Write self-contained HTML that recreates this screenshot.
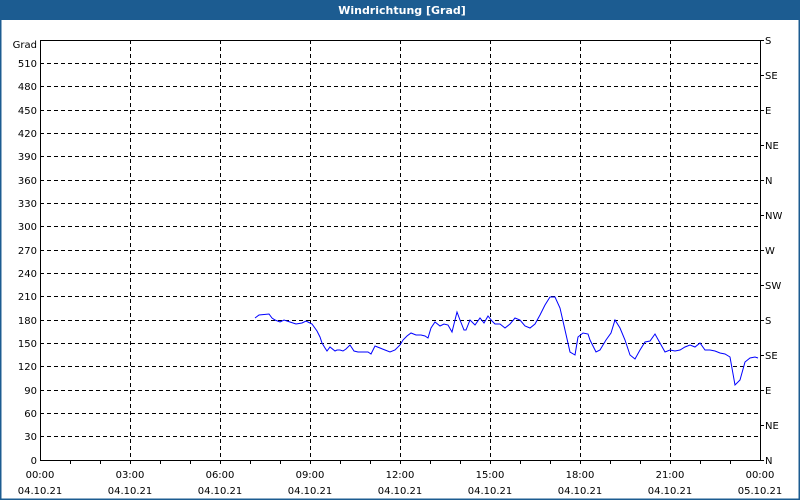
<!DOCTYPE html>
<html><head><meta charset="utf-8"><style>
html,body{margin:0;padding:0;width:800px;height:500px;overflow:hidden;background:#fff}
svg{display:block}
text{font-family:Tahoma,"DejaVu Sans","Liberation Sans",sans-serif;font-size:10px;fill:#000}
</style></head><body>
<svg width="800" height="500" xmlns="http://www.w3.org/2000/svg">
<rect x="0" y="0" width="800" height="500" fill="#fff"/>
<rect x="0.5" y="0.5" width="799" height="499" fill="none" stroke="#1c5c91" stroke-width="2"/>
<rect x="0" y="0" width="800" height="20" fill="#1c5c91"/>
<text x="402" y="14" text-anchor="middle" style="fill:#fff;font-weight:bold;font-size:11px">Windrichtung [Grad]</text>
<g id="grid" stroke="#000" stroke-width="1" stroke-dasharray="4,3" fill="none">
<path d="M40 63.5H760M40 86.5H760M40 110.5H760M40 133.5H760M40 156.5H760M40 180.5H760M40 203.5H760M40 226.5H760M40 250.5H760M40 273.5H760M40 296.5H760M40 320.5H760M40 343.5H760M40 366.5H760M40 390.5H760M40 413.5H760M40 436.5H760"/>
<path d="M130.5 40V460M220.5 40V460M310.5 40V460M400.5 40V460M490.5 40V460M580.5 40V460M670.5 40V460"/>
</g>
<path d="M40.5 40V460.5H760.5V40M40 40.5H760" stroke="#000" fill="none"/>
<path d="M70.5 460v4M100.5 460v4M130.5 460v4M160.5 460v4M190.5 460v4M220.5 460v4M250.5 460v4M280.5 460v4M310.5 460v4M340.5 460v4M370.5 460v4M400.5 460v4M430.5 460v4M460.5 460v4M490.5 460v4M520.5 460v4M550.5 460v4M580.5 460v4M610.5 460v4M640.5 460v4M670.5 460v4M700.5 460v4M730.5 460v4" stroke="#000"/>
<path d="M760 40.5h4M760 75.5h4M760 110.5h4M760 145.5h4M760 180.5h4M760 215.5h4M760 250.5h4M760 285.5h4M760 320.5h4M760 355.5h4M760 390.5h4M760 425.5h4M760 460.5h4" stroke="#000"/>
<g text-anchor="end">
<text x="37" y="48">Grad</text>
<text x="37" y="67">510</text><text x="37" y="90">480</text><text x="37" y="114">450</text><text x="37" y="137">420</text>
<text x="37" y="160">390</text><text x="37" y="184">360</text><text x="37" y="207">330</text><text x="37" y="230">300</text>
<text x="37" y="254">270</text><text x="37" y="277">240</text><text x="37" y="300">210</text><text x="37" y="324">180</text>
<text x="37" y="347">150</text><text x="37" y="370">120</text><text x="37" y="394">90</text><text x="37" y="417">60</text>
<text x="37" y="440">30</text><text x="37" y="464">0</text>
</g>
<g>
<text x="765" y="44">S</text><text x="765" y="79">SE</text><text x="765" y="114">E</text><text x="765" y="149">NE</text>
<text x="765" y="184">N</text><text x="765" y="219">NW</text><text x="765" y="254">W</text><text x="765" y="289">SW</text>
<text x="765" y="324">S</text><text x="765" y="359">SE</text><text x="765" y="394">E</text><text x="765" y="429">NE</text>
<text x="765" y="464">N</text>
</g>
<g text-anchor="middle">
<text x="40" y="478">00:00</text><text x="130" y="478">03:00</text><text x="220" y="478">06:00</text><text x="310" y="478">09:00</text>
<text x="400" y="478">12:00</text><text x="490" y="478">15:00</text><text x="580" y="478">18:00</text><text x="670" y="478">21:00</text><text x="760" y="478">00:00</text>
<text x="40" y="494">04.10.21</text><text x="130" y="494">04.10.21</text><text x="220" y="494">04.10.21</text><text x="310" y="494">04.10.21</text>
<text x="400" y="494">04.10.21</text><text x="490" y="494">04.10.21</text><text x="580" y="494">04.10.21</text><text x="670" y="494">04.10.21</text><text x="760" y="494">05.10.21</text>
</g>
<polyline fill="none" stroke="#0000ff" stroke-width="1" points="255,318 259,315 269,314 272,318 275,320 280,322 284,320 290,322 296,324 302,323 306,321 312,324 317,331 320,337 322,343 325,348 327,351 330,347 335,351 337,350 340,350 343,351 346,349 350,345 354,351 358,352 364,352 368,352 371,354 375,346 380,348 385,350 390,352 395,350 400,345 403,340 407,336 411,333 416,335 421,335 425,336 428,338 431,328 435,322 440,326 444,324 448,325 452,332 455,320 457,312 460,320 464,330 466,330 470,320 475,325 480,318 484,323 488,316 492,321 495,324 500,324 505,328 510,324 515,318 520,320 525,326 530,328 535,324 540,315 545,305 550,297 555,297 560,308 565,330 570,352 575,355 578,337 583,333 588,334 590,340 596,352 600,350 606,340 611,333 615,320 620,328 625,340 630,355 635,359 640,350 645,342 650,341 655,334 660,343 665,352 670,350 675,351 680,350 685,347 690,345 695,347 700,343 705,350 710,350 715,351 720,353 725,354 730,357 735,385 740,380 745,362 750,358 755,357 758,358"/>
</svg>
</body></html>
